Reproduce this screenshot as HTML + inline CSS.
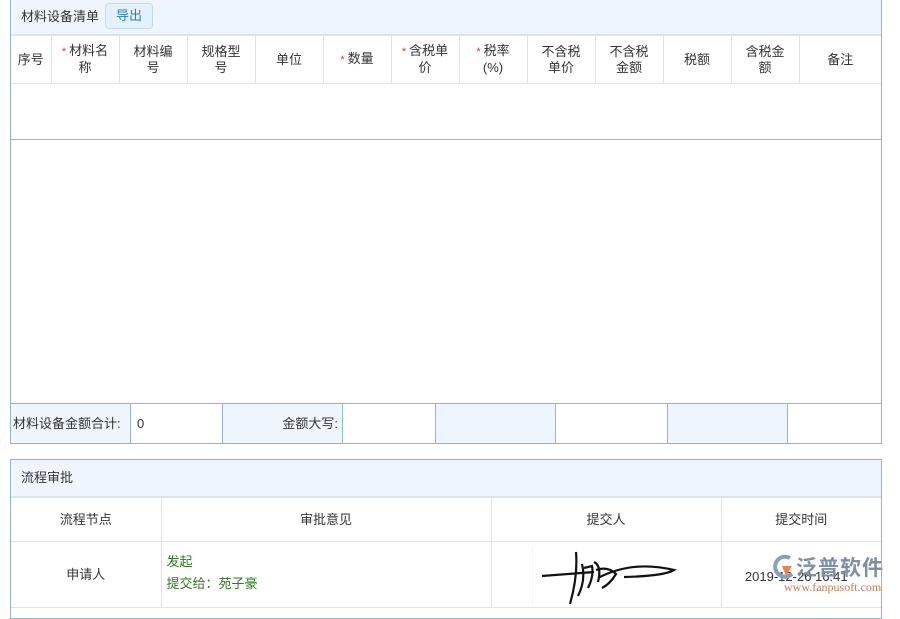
<!DOCTYPE html>
<html><head><meta charset="utf-8"><style>
*{box-sizing:border-box;margin:0;padding:0}
body{width:900px;height:600px;overflow:hidden;background:#fff;font-family:"Liberation Sans","Noto Sans CJK SC",sans-serif;font-size:13px;color:#333;position:relative}
.abs{position:absolute}
.panel{position:absolute;left:10px;width:872px;border:1px solid #8fb7c4}
.hd{background:#eef5fd;height:35px;line-height:34px;padding-left:10px;border-bottom:1px solid #dde5ea}
.btn{display:inline-block;margin-left:6px;height:26px;line-height:24px;padding:0 10px;border:1px solid #c6dbea;border-radius:4px;background:#e4f0fa;color:#2a7fc0;vertical-align:middle;position:relative;top:-2px}
table{border-collapse:collapse;table-layout:fixed;width:100%}
td{border:1px solid #e2e2e2;text-align:center;vertical-align:middle;line-height:16px}
.r{color:#d33;font-size:11px;margin-right:3px}
</style></head><body>
<div class="panel" style="top:-1px;height:445px">
<div class="hd">材料设备清单<span class="btn">导出</span></div>
<table style="border-top:none">
<colgroup><col style="width:40px"><col style="width:68px"><col style="width:68px"><col style="width:68px"><col style="width:68px"><col style="width:68px"><col style="width:68px"><col style="width:68px"><col style="width:68px"><col style="width:68px"><col style="width:68px"><col style="width:68px"><col></colgroup>
<tr style="height:48px"><td style="border-left:none">序号</td><td><span class="r">*</span>材料名<br>称</td><td>材料编<br>号</td><td>规格型<br>号</td><td>单位</td><td><span class="r">*</span>数量</td><td><span class="r">*</span>含税单<br>价</td><td><span class="r">*</span>税率<br>(%)</td><td>不含税<br>单价</td><td>不含税<br>金额</td><td>税额</td><td>含税金<br>额</td><td style="border-right:none">备注</td></tr>
</table>
<div class="abs" style="left:0;right:0;top:139px;border-top:1px solid #8fb7c4"></div>
<div class="abs" style="left:0;right:0;top:403px;height:40px;border-top:1px solid #8fb7c4;display:flex">
<div style="width:120px;background:#eef5fd;border-right:1px solid #8fb7c4;line-height:39px;padding-left:2px">材料设备金额合计:</div>
<div style="width:92px;border-right:1px solid #8fb7c4;line-height:39px;padding-left:6px">0</div>
<div style="width:120px;background:#eef5fd;border-right:1px solid #8fb7c4;line-height:39px;text-align:right;padding-right:4px">金额大写:</div>
<div style="width:93px;border-right:1px solid #8fb7c4"></div>
<div style="width:120px;background:#eef5fd;border-right:1px solid #8fb7c4"></div>
<div style="width:112px;border-right:1px solid #8fb7c4"></div>
<div style="width:120px;background:#eef5fd;border-right:1px solid #8fb7c4"></div>
<div style="flex:1"></div>
</div>
</div>
<div class="panel" style="top:459px;height:160px">
<div class="hd" style="height:37px;line-height:36px">流程审批</div>
<table>
<colgroup><col style="width:150px"><col style="width:330px"><col style="width:230px"><col></colgroup>
<tr style="height:44px"><td style="border-left:none">流程节点</td><td>审批意见</td><td>提交人</td><td style="border-right:none">提交时间</td></tr>
<tr style="height:66px"><td style="border-left:none">申请人</td><td style="text-align:left;padding-left:5px;color:#2a7a1e;line-height:22px;vertical-align:top;padding-top:9px">发起<br>提交给：苑子豪</td><td style="position:relative"><svg width="150" height="60" style="position:absolute;left:40px;top:4px" viewBox="0 0 150 60"><path d="M10 30 L62 26 M44 6 Q46 30 38 58 M50 18 Q54 34 46 50 M52 22 L60 20 Q62 30 56 42 M62 16 Q70 20 66 36 M64 24 Q76 20 84 28 Q78 38 70 42 M66 32 Q100 14 142 24 Q132 30 92 31" stroke="#111" stroke-width="2.2" fill="none"/><line x1="0" y1="0" x2="0" y2="60" stroke="#eee"/></svg></td><td style="border-right:none;padding-right:10px;padding-top:4px">2019-12-26 16:41</td></tr>
</table>
</div>
<div class="abs" style="left:770px;top:552px;width:130px;height:45px">
<svg class="abs" style="left:0;top:2px" width="26" height="26" viewBox="0 0 26 26"><path d="M20 4 A10 10 0 1 0 22 20" stroke="#8aa0b8" stroke-width="4" fill="none"/><path d="M12 12 L22 12 L16 22 Z" fill="#e9844a"/></svg>
<div class="abs" style="left:26px;top:0;font-size:21px;color:#7d8fa6;letter-spacing:1px;font-weight:bold">泛普软件</div>
<div class="abs" style="left:14px;top:28px;font-size:12px;color:#c97b52;font-family:'Liberation Serif',serif">www.fanpusoft.com</div>
</div>
</body></html>
